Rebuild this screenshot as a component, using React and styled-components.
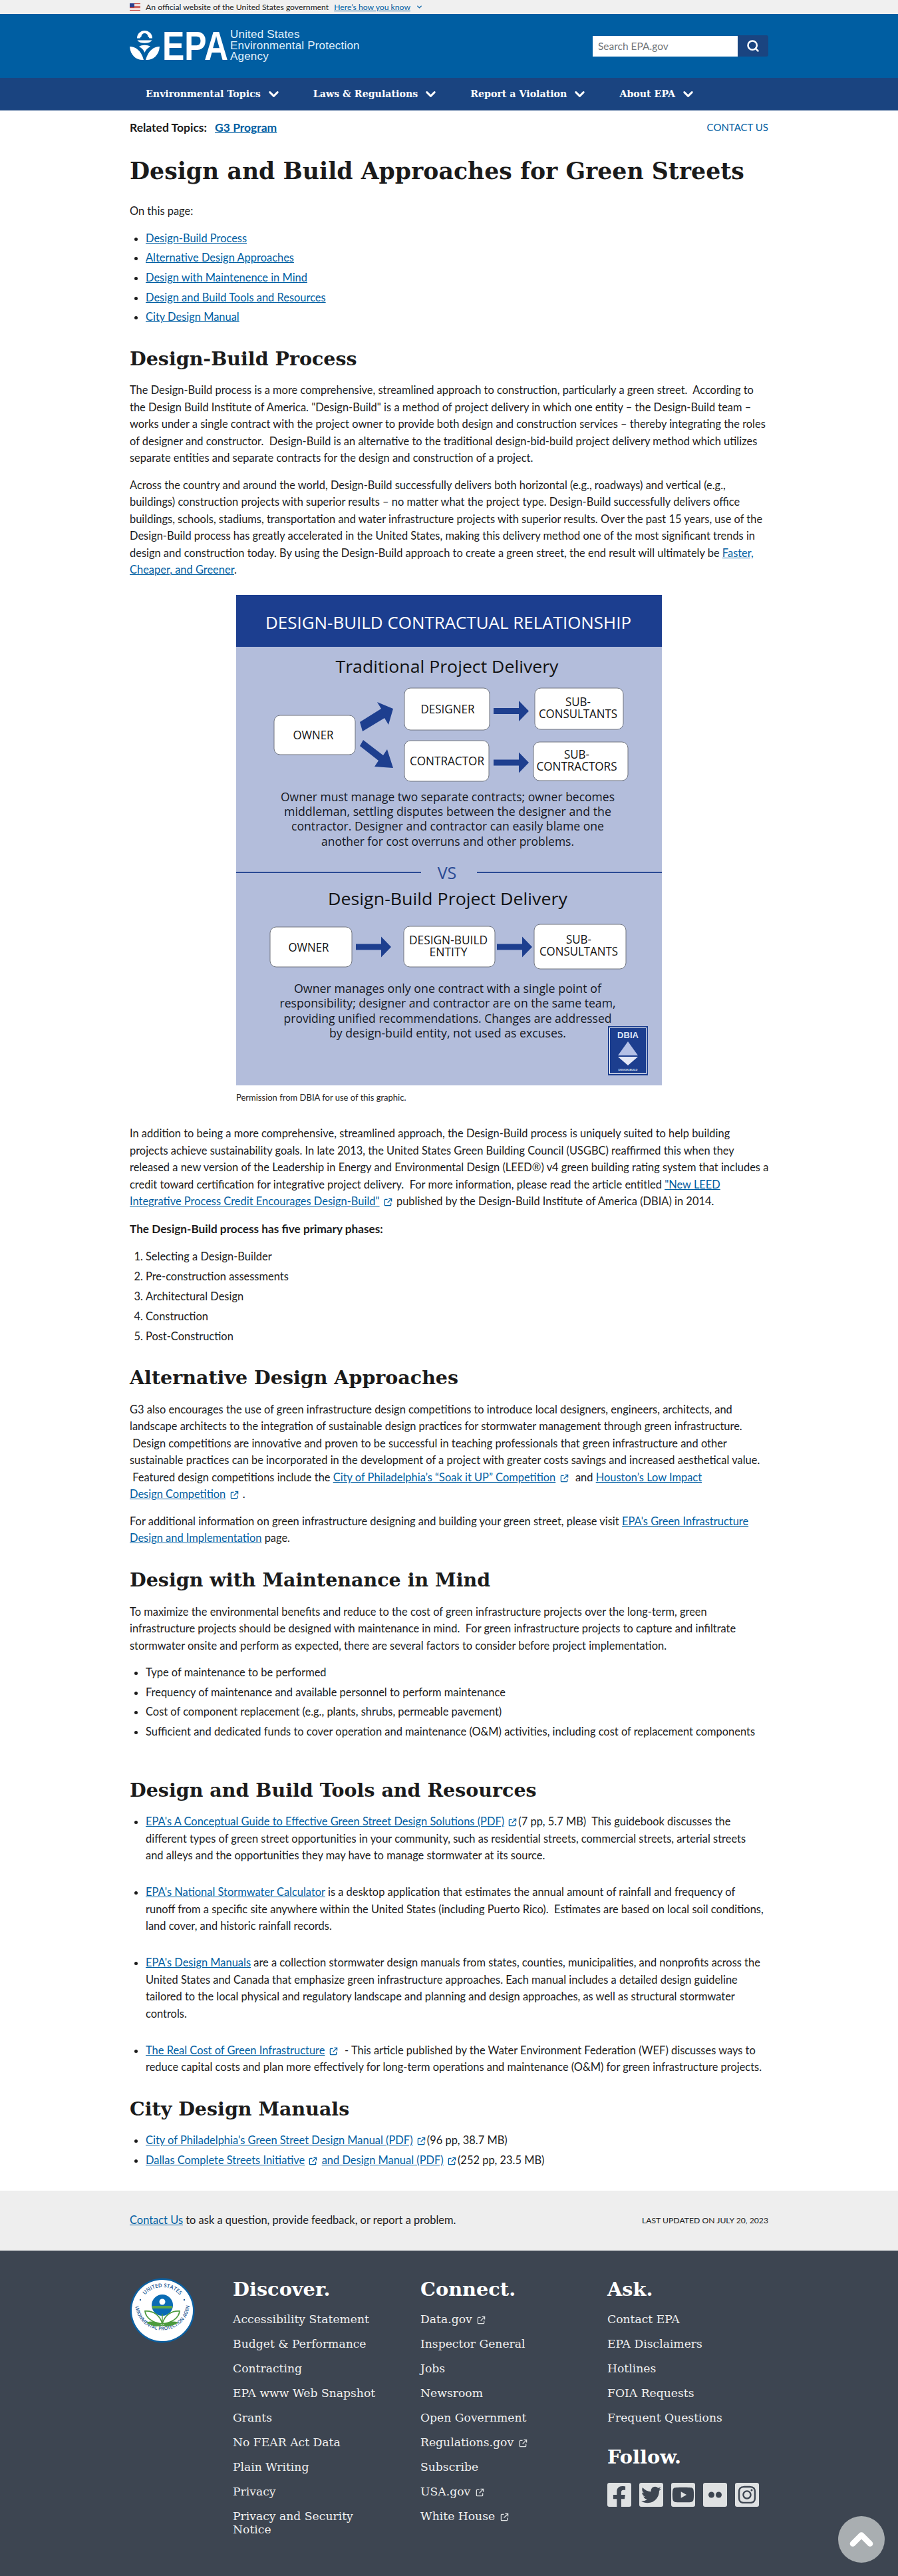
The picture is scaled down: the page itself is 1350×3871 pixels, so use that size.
import React from 'react';
import styled, { createGlobalStyle } from 'styled-components';
import { ChevronDown, Search, ChevronUp } from 'lucide-react';
import { FaFacebookF, FaTwitter, FaYoutube, FaInstagram } from 'react-icons/fa';

const serif = '"DejaVu Serif", "Liberation Serif", serif';
const sans = 'Lato, "Noto Sans", sans-serif';
const chart = '"Open Sans", "Noto Sans", sans-serif';

const topNav = ['Environmental Topics', 'Laws & Regulations', 'Report a Violation', 'About EPA'];

const tocLinks = [
  'Design-Build Process',
  'Alternative Design Approaches',
  'Design with Maintenence in Mind',
  'Design and Build Tools and Resources',
  'City Design Manual',
];

const discoverLinks = [
  'Accessibility Statement',
  'Budget & Performance',
  'Contracting',
  'EPA www Web Snapshot',
  'Grants',
  'No FEAR Act Data',
  'Plain Writing',
  'Privacy',
  'Privacy and Security Notice',
];

const connectLinks = [
  { text: 'Data.gov', ext: true },
  { text: 'Inspector General' },
  { text: 'Jobs' },
  { text: 'Newsroom' },
  { text: 'Open Government' },
  { text: 'Regulations.gov', ext: true },
  { text: 'Subscribe' },
  { text: 'USA.gov', ext: true },
  { text: 'White House', ext: true },
];

const askLinks = ['Contact EPA', 'EPA Disclaimers', 'Hotlines', 'FOIA Requests', 'Frequent Questions'];

function ExternalIcon() {
  return (
    <ExtSvg viewBox="0 0 14 14" aria-hidden="true">
      <path d="M6 2.5H2.5a1 1 0 0 0-1 1v8a1 1 0 0 0 1 1h8a1 1 0 0 0 1-1V8" />
      <path d="M8 1.5h4.5V6M12.5 1.5 6 8" />
    </ExtSvg>
  );
}

function Flag() {
  return (
    <svg width="16" height="11" viewBox="0 0 16 11" aria-hidden="true">
      <rect width="16" height="11" fill="#fff" />
      {[0, 2, 4, 6, 8, 10].map((y) => (
        <rect key={y} y={y} width="16" height="1" fill="#c8463f" />
      ))}
      <rect width="7" height="6" fill="#2c3f8f" />
    </svg>
  );
}

function EpaLogo() {
  return (
    <LogoSvg width="150" height="46" viewBox="0 0 150 46" aria-label="EPA">
      <g fill="#fff">
        <path d="M11 11.5 a11.5 11.5 0 0 1 23 0 h-4.5 a3 3 0 0 0-2-2.5 a5 5 0 0 0-10 0 a3 3 0 0 0-2 2.5z" />
        <path d="M11.5 14.5 h22 a11.5 6 0 0 1-22 0z" />
        <path d="M0 24 C8 24 17 29 21 44 C11 45 1 38 0 24z" />
        <path d="M45 24 C37 24 28 29 24 44 C34 45 44 38 45 24z" />
        <path d="M14 24 C18 21 27 21 31 24 C27 26 24 29 22.5 33 C21 29 18 26 14 24z" />
        <text x="49" y="44" fontFamily='"Liberation Sans", sans-serif' fontWeight="700" fontSize="61" textLength="99" lengthAdjust="spacingAndGlyphs">EPA</text>
      </g>
    </LogoSvg>
  );
}

function Seal() {
  return (
    <LogoSvg width="98" height="98" viewBox="0 0 98 98" aria-label="EPA seal">
      <defs>
        <path id="sealTop" d="M14 49a35 35 0 0 1 70 0" />
        <path id="sealBottom" d="M8.5 44a41 41 0 0 0 81 0" />
      </defs>
      <circle cx="49" cy="49" r="48.5" fill="#0b5fa0" />
      <circle cx="49" cy="49" r="46" fill="#fff" />
      <text fontFamily={chart} fontWeight="600" fontSize="8" fill="#1f5c96">
        <textPath href="#sealTop" startOffset="50%" textAnchor="middle">UNITED STATES</textPath>
      </text>
      <text fontFamily={chart} fontWeight="600" fontSize="7.2" fill="#1f5c96">
        <textPath href="#sealBottom" startOffset="50%" textAnchor="middle">ENVIRONMENTAL PROTECTION AGENCY</textPath>
      </text>
      <circle cx="16" cy="33" r="1.2" fill="#1f5c96" />
      <circle cx="82" cy="33" r="1.2" fill="#1f5c96" />
      <circle cx="49" cy="41" r="16" fill="#0a6cb4" />
      <rect x="34" y="42" width="30" height="4" fill="#5aa544" />
      <circle cx="49" cy="36" r="4.5" fill="#fff" />
      <path d="M49 69C46 57 36 49 23 50c1 10 12 18 26 19zM49 69c3-12 13-20 26-19-1 10-12 18-26 19z" fill="none" stroke="#4c9a3d" strokeWidth="1.8" />
      <path d="M49 72C43 66 34 64 25 67c6 5 16 7 24 5zM49 72c6-6 15-8 24-5-6 5-16 7-24 5z" fill="#4c9a3d" />
      <path d="M49 54v18" stroke="#4c9a3d" strokeWidth="1.4" />
    </LogoSvg>
  );
}

function Arrow({ x, y }) {
  return <polygon points={`${x},${y - 4.5} ${x + 38},${y - 4.5} ${x + 38},${y - 15.5} ${x + 53},${y} ${x + 38},${y + 15.5} ${x + 38},${y + 4.5} ${x},${y + 4.5}`} fill="#1e3f8f" />;
}

function Node({ x, y, w, h, lines, cx, baseY }) {
  return (
    <g>
      <rect x={x} y={y} width={w} height={h} rx="9" fill="#fff" stroke="#70757f" strokeWidth="1" />
      {lines.map(([text, len], i) => (
        <text key={text} x={cx} y={baseY + i * 18} textAnchor="middle" fontFamily={chart} fontSize="18" fill="#111" textLength={len} lengthAdjust="spacingAndGlyphs">{text}</text>
      ))}
    </g>
  );
}

function CopyLines({ y, lines, step }) {
  return lines.map(([text, len], i) => (
    <text key={text} x="318" y={y + i * step} textAnchor="middle" fontFamily={chart} fontSize="18" fill="#15181f" textLength={len} lengthAdjust="spacingAndGlyphs">{text}</text>
  ));
}

function Diagram() {
  return (
    <DiagramSvg viewBox="0 0 640 737" role="img" aria-label="Design-Build contractual relationship">
      <rect width="640" height="737" fill="#b3bddb" />
      <rect width="640" height="78" fill="#1c3e8f" />
      <text x="319" y="51" textAnchor="middle" fontFamily={chart} fontSize="26" fill="#fff" textLength="550" lengthAdjust="spacingAndGlyphs">DESIGN-BUILD CONTRACTUAL RELATIONSHIP</text>

      <text x="317" y="117" textAnchor="middle" fontFamily={chart} fontSize="25" fill="#111" textLength="335" lengthAdjust="spacingAndGlyphs">Traditional Project Delivery</text>
      <Node x={57} y={181} w={122} h={59} cx={116} baseY={217} lines={[['OWNER', 61]]} />
      <Node x={253} y={140} w={128} h={63} cx={318} baseY={178} lines={[['DESIGNER', 81]]} />
      <Node x={253} y={219} w={127} h={61} cx={317} baseY={256} lines={[['CONTRACTOR', 112]]} />
      <Node x={449} y={140} w={133} h={62} cx={514} baseY={167} lines={[['SUB-', 38], ['CONSULTANTS', 118]]} />
      <Node x={447} y={221} w={142} h={58} cx={512} baseY={246} lines={[['SUB-', 38], ['CONTRACTORS', 121]]} />
      <polygon points="186,191 218,171 212,161 236,171 229,195 223,185 190,205" fill="#1e3f8f" />
      <polygon points="191,218 221,241 227,232 236,260 208,258 214,249 186,227" fill="#1e3f8f" />
      <Arrow x={387} y={174.5} />
      <Arrow x={387} y={252} />
      <CopyLines y={310} step={22.2} lines={[
        ['Owner must manage two separate contracts; owner becomes', 502],
        ['middleman, settling disputes between the designer and the', 492],
        ['contractor. Designer and contractor can easily blame one', 470],
        ['another for cost overruns and other problems.', 380],
      ]} />

      <rect y="416" width="278" height="2" fill="#2a4a94" />
      <rect x="362" y="416" width="278" height="2" fill="#2a4a94" />
      <text x="317" y="427" textAnchor="middle" fontFamily={chart} fontSize="25" fill="#2a4a94">VS</text>
      <text x="318" y="466" textAnchor="middle" fontFamily={chart} fontSize="25" fill="#111" textLength="360" lengthAdjust="spacingAndGlyphs">Design-Build Project Delivery</text>
      <Node x={51} y={499} w={123} h={60} cx={109} baseY={536} lines={[['OWNER', 61]]} />
      <Node x={252} y={498} w={137} h={61} cx={319} baseY={525} lines={[['DESIGN-BUILD', 118], ['ENTITY', 57]]} />
      <Node x={448} y={495} w={138} h={67} cx={515} baseY={524} lines={[['SUB-', 38], ['CONSULTANTS', 118]]} />
      <Arrow x={180} y={529} />
      <Arrow x={392} y={529} />
      <CopyLines y={598} step={22.3} lines={[
        ['Owner manages only one contract with a single point of', 462],
        ['responsibility; designer and contractor are on the same team,', 505],
        ['providing unified recommendations. Changes are addressed', 493],
        ['by design-build entity, not used as excuses.', 356],
      ]} />

      <rect x="559" y="648" width="60" height="74" fill="#1c3e8f" />
      <rect x="561.5" y="650.5" width="55" height="69" fill="none" stroke="#fff" strokeWidth="1" />
      <text x="589" y="666" textAnchor="middle" fontFamily='"Liberation Sans", sans-serif' fontWeight="700" fontSize="13" fill="#dfe5f5">DBIA</text>
      <polygon points="589,671 604,692 574,692" fill="#b3c0e6" />
      <polygon points="574,694 604,694 589,707" fill="#e3e8f7" />
      <text x="589" y="715" textAnchor="middle" fontFamily='"Liberation Sans", sans-serif' fontWeight="700" fontSize="4" fill="#dfe5f5">DESIGN-BUILD</text>
    </DiagramSvg>
  );
}

export default function App() {
  return (
    <>
      <GlobalStyle />
      <GovBanner>
        <Wrap>
          <GovRow>
            <Flag />
            <span>An official website of the United States government</span>
            <a href="#">Here’s how you know</a>
            <ChevronDown size={11} color="#005ea2" strokeWidth={3} />
          </GovRow>
        </Wrap>
      </GovBanner>

      <MastHead>
        <HeaderRow>
          <Brand>
            <EpaLogo />
            <BrandName>United States<br />Environmental Protection<br />Agency</BrandName>
          </Brand>
          <SearchBox>
            <SearchInput placeholder="Search EPA.gov" />
            <SearchButton aria-label="Search"><Search size={20} strokeWidth={3} /></SearchButton>
          </SearchBox>
        </HeaderRow>
      </MastHead>

      <MainNav>
        <NavRow>
          {topNav.map((item) => (
            <NavItem key={item}>{item}<ChevronDown size={23} strokeWidth={3} /></NavItem>
          ))}
        </NavRow>
      </MainNav>

      <Main>
        <RelatedRow>
          <RelatedTopics>Related Topics:<a href="#">G3 Program</a></RelatedTopics>
          <ContactLink href="#">Contact Us</ContactLink>
        </RelatedRow>

        <Title>Design and Build Approaches for Green Streets</Title>

        <Para>On this page:</Para>
        <BulletList>
          {tocLinks.map((item) => (
            <li key={item}><a href="#">{item}</a></li>
          ))}
        </BulletList>

        <Heading>Design-Build Process</Heading>
        <Para>
          The Design-Build process is a more comprehensive, streamlined approach to construction, particularly a green street.&nbsp; According to<br />
          the Design Build Institute of America. "Design-Build" is a method of project delivery in which one entity – the Design-Build team –<br />
          works under a single contract with the project owner to provide both design and construction services – thereby integrating the roles<br />
          of designer and constructor.&nbsp; Design-Build is an alternative to the traditional design-bid-build project delivery method which utilizes<br />
          separate entities and separate contracts for the design and construction of a project.
        </Para>
        <Para>
          Across the country and around the world, Design-Build successfully delivers both horizontal (e.g., roadways) and vertical (e.g.,<br />
          buildings) construction projects with superior results – no matter what the project type. Design-Build successfully delivers office<br />
          buildings, schools, stadiums, transportation and water infrastructure projects with superior results. Over the past 15 years, use of the<br />
          Design-Build process has greatly accelerated in the United States, making this delivery method one of the most significant trends in<br />
          design and construction today. By using the Design-Build approach to create a green street, the end result will ultimately be <a href="#">Faster,<br />
          Cheaper, and Greener</a>.
        </Para>

        <Figure>
          <Diagram />
          <Caption>Permission from DBIA for use of this graphic.</Caption>
        </Figure>

        <Para>
          In addition to being a more comprehensive, streamlined approach, the Design-Build process is uniquely suited to help building<br />
          projects achieve sustainability goals. In late 2013, the United States Green Building Council (USGBC) reaffirmed this when they<br />
          released a new version of the Leadership in Energy and Environmental Design (LEED®) v4 green building rating system that includes a<br />
          credit toward certification for integrative project delivery.&nbsp; For more information, please read the article entitled <a href="#">"New LEED<br />
          Integrative Process Credit Encourages Design-Build"</a> <ExternalIcon /> published by the Design-Build Institute of America (DBIA) in 2014.
        </Para>
        <Para><strong>The Design-Build process has five primary phases:</strong></Para>
        <NumberList>
          <li>Selecting a Design-Builder</li>
          <li>Pre-construction assessments</li>
          <li>Architectural Design</li>
          <li>Construction</li>
          <li>Post-Construction</li>
        </NumberList>

        <Heading>Alternative Design Approaches</Heading>
        <Para>
          G3 also encourages the use of green infrastructure design competitions to introduce local designers, engineers, architects, and<br />
          landscape architects to the integration of sustainable design practices for stormwater management through green infrastructure.<br />
          &nbsp;Design competitions are innovative and proven to be successful in teaching professionals that green infrastructure and other<br />
          sustainable practices can be incorporated in the development of a project with greater costs savings and increased aesthetical value.<br />
          &nbsp;Featured design competitions include the <a href="#">City of Philadelphia’s “Soak it UP” Competition</a> <ExternalIcon /> &nbsp;and <a href="#">Houston’s Low Impact<br />
          Design Competition</a> <ExternalIcon /> .
        </Para>
        <Para>
          For additional information on green infrastructure designing and building your green street, please visit <a href="#">EPA's Green Infrastructure<br />
          Design and Implementation</a> page.
        </Para>

        <Heading>Design with Maintenance in Mind</Heading>
        <Para>
          To maximize the environmental benefits and reduce to the cost of green infrastructure projects over the long-term, green<br />
          infrastructure projects should be designed with maintenance in mind.&nbsp; For green infrastructure projects to capture and infiltrate<br />
          stormwater onsite and perform as expected, there are several factors to consider before project implementation.
        </Para>
        <BulletList $after={57}>
          <li>Type of maintenance to be performed</li>
          <li>Frequency of maintenance and available personnel to perform maintenance</li>
          <li>Cost of component replacement (e.g., plants, shrubs, permeable pavement)</li>
          <li>Sufficient and dedicated funds to cover operation and maintenance (O&amp;M) activities, including cost of replacement components</li>
        </BulletList>

        <Heading $top={0}>Design and Build Tools and Resources</Heading>
        <BulletList $itemGap={29.5}>
          <li>
            <a href="#">EPA's A Conceptual Guide to Effective Green Street Design Solutions (PDF)</a> <ExternalIcon />(7 pp, 5.7 MB)&nbsp; This guidebook discusses the<br />
            different types of green street opportunities in your community, such as residential streets, commercial streets, arterial streets<br />
            and alleys and the opportunities they may have to manage stormwater at its source.
          </li>
          <li>
            <a href="#">EPA's National Stormwater Calculator</a> is a desktop application that estimates the annual amount of rainfall and frequency of<br />
            runoff from a specific site anywhere within the United States (including Puerto Rico).&nbsp; Estimates are based on local soil conditions,<br />
            land cover, and historic rainfall records.
          </li>
          <li>
            <a href="#">EPA's Design Manuals</a> are a collection stormwater design manuals from states, counties, municipalities, and nonprofits across the<br />
            United States and Canada that emphasize green infrastructure approaches. Each manual includes a detailed design guideline<br />
            tailored to the local physical and regulatory landscape and planning and design approaches, as well as structural stormwater<br />
            controls.
          </li>
          <li>
            <a href="#">The Real Cost of Green Infrastructure</a> <ExternalIcon /> &nbsp;- This article published by the Water Environment Federation (WEF) discusses ways to<br />
            reduce capital costs and plan more effectively for long-term operations and maintenance (O&amp;M) for green infrastructure projects.
          </li>
        </BulletList>

        <Heading>City Design Manuals</Heading>
        <BulletList>
          <li><a href="#">City of Philadelphia's Green Street Design Manual (PDF)</a> <ExternalIcon />(96 pp, 38.7 MB)</li>
          <li><a href="#">Dallas Complete Streets Initiative</a> <ExternalIcon /> <a href="#">and Design Manual (PDF)</a> <ExternalIcon />(252 pp, 23.5 MB)</li>
        </BulletList>
      </Main>

      <FeedbackBand>
        <FeedbackRow>
          <span><a href="#">Contact Us</a> to ask a question, provide feedback, or report a problem.</span>
          <LastUpdated>Last updated on July 20, 2023</LastUpdated>
        </FeedbackRow>
      </FeedbackBand>

      <SiteFooter>
        <FooterRow>
          <SealSlot><Seal /></SealSlot>
          <FooterColumn>
            <FooterTitle>Discover.</FooterTitle>
            {discoverLinks.map((item) => (
              <FooterLink key={item} href="#">{item}</FooterLink>
            ))}
          </FooterColumn>
          <FooterColumn>
            <FooterTitle>Connect.</FooterTitle>
            {connectLinks.map(({ text, ext }) => (
              <FooterLink key={text} href="#">{text}{ext && <> <ExternalIcon /></>}</FooterLink>
            ))}
          </FooterColumn>
          <FooterColumn>
            <FooterTitle>Ask.</FooterTitle>
            {askLinks.map((item) => (
              <FooterLink key={item} href="#">{item}</FooterLink>
            ))}
            <FooterTitle $top={15}>Follow.</FooterTitle>
            <SocialRow>
              <SocialTile><FacebookGlyph /></SocialTile>
              <SocialTile><FaTwitter size={30} /></SocialTile>
              <SocialTile><FaYoutube size={34} /></SocialTile>
              <SocialTile>
                <svg width="24" height="10" viewBox="0 0 24 10" aria-hidden="true">
                  <circle cx="6.5" cy="5" r="4.5" fill="#3d4551" />
                  <circle cx="17.5" cy="5" r="4.5" fill="#3d4551" />
                </svg>
              </SocialTile>
              <SocialTile><FaInstagram size={30} /></SocialTile>
            </SocialRow>
          </FooterColumn>
        </FooterRow>
        <BackToTop aria-label="Back to top"><ChevronUp size={52} strokeWidth={4} /></BackToTop>
      </SiteFooter>
    </>
  );
}

const GlobalStyle = createGlobalStyle`
  * { box-sizing: border-box; }
  body {
    margin: 0;
    background: #fff;
    color: #1b1b1b;
    font-family: ${sans};
    font-size: 16.45px;
    line-height: 25.5px;
  }
  a { color: #005ea2; }
`;

const Wrap = styled.div`
  width: 960px;
  margin: 0 auto;
`;

const LogoSvg = styled.svg`
  display: block;
  overflow: visible;
`;

const GovBanner = styled.div`
  height: 21px;
  background: #f0f0f0;
  font-size: 12.2px;
  line-height: 21px;
`;

const GovRow = styled.div`
  display: flex;
  align-items: center;
  gap: 8px;
  height: 21px;
`;

const MastHead = styled.header`
  height: 96px;
  background: #005ea2;
`;

const HeaderRow = styled(Wrap)`
  display: flex;
  align-items: center;
  justify-content: space-between;
  height: 96px;
`;

const Brand = styled.div`
  display: flex;
  align-items: center;
  gap: 1px;
`;

const BrandName = styled.div`
  font-family: "Liberation Sans", sans-serif;
  font-size: 17px;
  line-height: 16.5px;
  color: #e1f0fb;
  letter-spacing: 0.2px;
`;

const SearchBox = styled.form`
  display: flex;
  align-items: center;
`;

const SearchInput = styled.input`
  width: 218px;
  height: 31px;
  border: 0;
  padding: 0 8px;
  font-family: ${sans};
  font-size: 15.5px;
  background: #fff;

  &::placeholder {
    color: #71767a;
  }
`;

const SearchButton = styled.button`
  display: flex;
  align-items: center;
  justify-content: center;
  width: 46px;
  height: 32px;
  border: 0;
  border-radius: 0 3px 3px 0;
  background: #1a4480;
  color: #fff;
`;

const MainNav = styled.nav`
  height: 49px;
  background: #1a4480;
`;

const NavRow = styled(Wrap)`
  display: flex;
  align-items: center;
  gap: 48px;
  height: 49px;
  padding-left: 24px;
`;

const NavItem = styled.div`
  display: flex;
  align-items: center;
  gap: 8px;
  font-family: ${serif};
  font-weight: 700;
  font-size: 14.2px;
  color: #fff;
  white-space: nowrap;
`;

const Main = styled(Wrap)`
  padding-top: 13px;
  padding-bottom: 32px;
`;

const RelatedRow = styled.div`
  display: flex;
  align-items: center;
  justify-content: space-between;
`;

const RelatedTopics = styled.div`
  font-size: 17.5px;
  font-weight: 700;

  a {
    margin-left: 12px;
  }
`;

const ContactLink = styled.a`
  font-size: 15px;
  text-transform: uppercase;
  text-decoration: none;
`;

const Title = styled.h1`
  margin: 29.5px 0 25px;
  font-family: ${serif};
  font-size: 34.7px;
  line-height: 46px;
  font-weight: 700;
  white-space: nowrap;
`;

const Heading = styled.h2`
  margin: ${(p) => (p.$top === undefined ? 32 : p.$top)}px 0 18.7px;
  font-family: ${serif};
  font-size: 28.5px;
  line-height: 34px;
  font-weight: 700;
`;

const Para = styled.p`
  margin: 0 0 15px;
  white-space: nowrap;

  strong {
    font-size: 17.2px;
  }
`;

const BulletList = styled.ul`
  margin: 0 0 ${(p) => (p.$after === undefined ? 0 : p.$after)}px;
  padding-left: 24px;
  white-space: nowrap;

  li + li {
    margin-top: ${(p) => p.$itemGap || 4.2}px;
  }
`;

const NumberList = styled.ol`
  margin: 16px 0 0;
  padding-left: 24px;

  li + li {
    margin-top: 4.3px;
  }
`;

const Figure = styled.figure`
  width: 640px;
  margin: 24.5px auto 32px;
`;

const DiagramSvg = styled.svg`
  display: block;
  width: 640px;
  height: 737px;
`;

const Caption = styled.figcaption`
  margin-top: 8px;
  font-size: 13px;
  line-height: 20px;
`;

const ExtSvg = styled.svg`
  display: inline-block;
  width: 13px;
  height: 13px;
  margin: 0 2px;
  vertical-align: -2px;
  fill: none;
  stroke: currentColor;
  stroke-width: 1.4;
  color: #005ea2;
`;

const FeedbackBand = styled.div`
  height: 90px;
  background: #eee;
`;

const FeedbackRow = styled(Wrap)`
  display: flex;
  align-items: center;
  justify-content: space-between;
  height: 90px;
`;

const LastUpdated = styled.span`
  font-size: 12.2px;
  text-transform: uppercase;
`;

const SiteFooter = styled.footer`
  position: relative;
  height: 489px;
  background: #3d4551;
  color: #fff;

  ${ExtSvg} {
    color: #dfe1e2;
  }
`;

const FooterRow = styled(Wrap)`
  display: grid;
  grid-template-columns: 155px 282px 281px 1fr;
  padding-top: 41px;
`;

const SealSlot = styled.div`
  height: 98px;
`;

const FooterColumn = styled.div`
  display: flex;
  flex-direction: column;
  align-items: flex-start;
`;

const FooterTitle = styled.h3`
  margin: ${(p) => p.$top || 0}px 0 18px;
  font-family: ${serif};
  font-size: 28.8px;
  line-height: 34px;
  font-weight: 700;
  color: #fff;
`;

const FooterLink = styled.a`
  max-width: 240px;
  margin-bottom: 16.5px;
  font-family: ${serif};
  font-size: 17.2px;
  line-height: 20.5px;
  color: #f0f0f0;
  text-decoration: none;
`;

const SocialRow = styled.div`
  display: flex;
  gap: 12px;
  margin-top: 4px;
`;

const SocialTile = styled.div`
  display: flex;
  align-items: center;
  justify-content: center;
  width: 36px;
  height: 36px;
  border-radius: 3px;
  background: #dfe1e2;
  color: #3d4551;
  overflow: hidden;
`;

const FacebookGlyph = styled(FaFacebookF)`
  width: 30px;
  height: 34px;
  margin-top: 8px;
`;

const BackToTop = styled.button`
  position: absolute;
  right: 20px;
  bottom: 20px;
  display: flex;
  align-items: center;
  justify-content: center;
  width: 70px;
  height: 70px;
  border: 0;
  border-radius: 50%;
  background: #a9aeb1;
  color: #fff;
`;
